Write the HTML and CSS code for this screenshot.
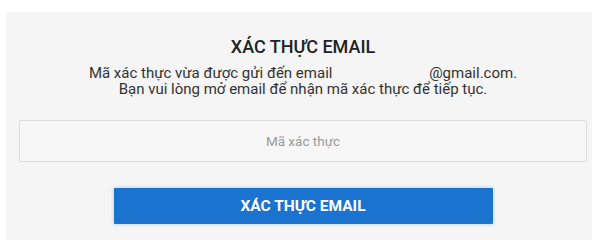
FILE: index.html
```html
<!DOCTYPE html>
<html lang="vi">
<head>
<meta charset="utf-8">
<title>Xác thực email</title>
<link rel="stylesheet" href="styles.css">
</head>
<body>
<div class="panel">
  <h1 class="title">XÁC THỰC EMAIL</h1>
  <p class="desc">Mã xác thực vừa được gửi đến email <span class="masked"></span>@gmail.com.<br>Bạn vui lòng mở email để nhận mã xác thực để tiếp tục.</p>
  <input class="code" type="text" placeholder="Mã xác thực">
  <div class="actions">
    <button class="submit" type="button">XÁC THỰC EMAIL</button>
  </div>
</div>
</body>
</html>
```
FILE: styles.css
```css
html, body {
  margin: 0;
  padding: 0;
  background: #ffffff;
  font-family: Roboto, "Noto Sans", Arial, sans-serif;
}
.panel {
  margin: 12px 7px 0 6px;
  background: #f5f5f5;
  padding: 24px 5px 20px 13px;
  height: 260px;
  box-sizing: border-box;
}
.title {
  margin: 0;
  font-size: 18px;
  line-height: 22px;
  font-weight: 500;
  color: #222;
  text-align: center;
}
.desc {
  margin: 7px 0 0;
  font-size: 15px;
  line-height: 16px;
  color: #333;
  text-align: center;
}
.masked {
  display: inline-block;
  width: 93px;
}
.code {
  display: block;
  margin-top: 23px;
  width: 100%;
  height: 42px;
  box-sizing: border-box;
  border: 1px solid #dcdcdc;
  border-radius: 2px;
  background: #f7f7f7;
  font-family: inherit;
  font-size: 13.5px;
  text-align: center;
  color: #333;
  outline: none;
}
.code::placeholder {
  color: #9a9a9a;
}
.actions {
  display: flex;
  justify-content: center;
  margin-top: 26px;
}
.submit {
  width: 379px;
  height: 36px;
  border: none;
  border-radius: 1px;
  background: #1a73cf;
  color: #fff;
  font-family: inherit;
  font-size: 15.5px;
  font-weight: 700;
  box-shadow: 0 0 3px 1px rgba(100, 170, 230, 0.35);
}
```
